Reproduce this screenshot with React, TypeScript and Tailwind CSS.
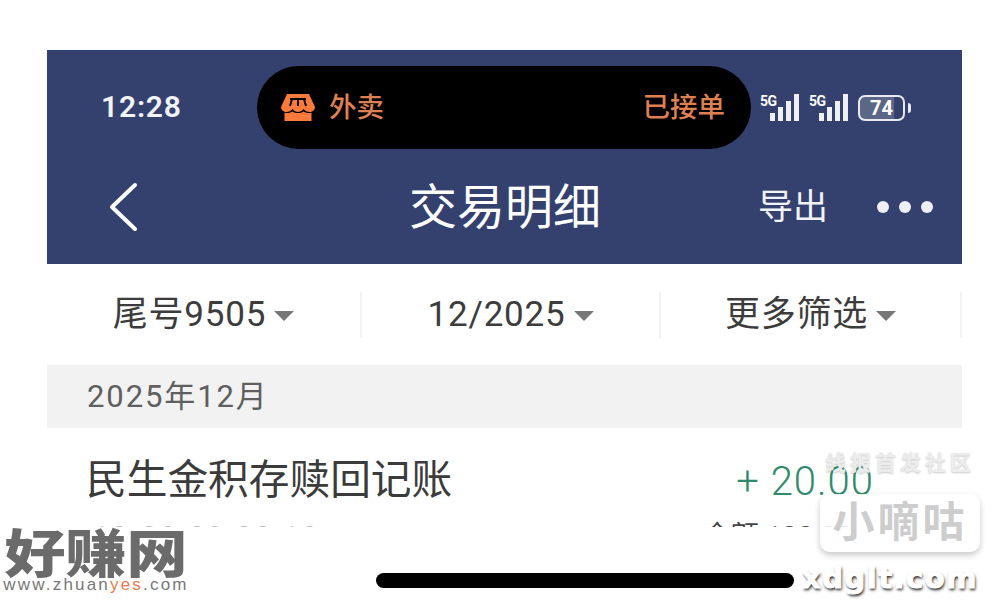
import React from "react";

const cjk = "font-['Roboto','Noto_Sans_CJK_SC',sans-serif]";

function Signal() {
  return (
    <div className="relative h-[27px] w-[39px]">
      <span className="absolute left-0 top-0 font-['Roboto',sans-serif] text-[14px] font-bold leading-[14px] tracking-[-0.5px] text-white">5G</span>
      <div className="absolute bottom-0 right-0 flex items-end gap-[3px]">
        <div className="h-[8px] w-[5px] bg-[#eef0f6]" />
        <div className="h-[14px] w-[5px] bg-[#eef0f6]" />
        <div className="h-[20px] w-[5px] bg-[#eef0f6]" />
        <div className="h-[27px] w-[5px] bg-[#eef0f6]" />
      </div>
    </div>
  );
}

function Shop() {
  return (
    <svg width="34" height="27" viewBox="0 0 34 27" fill="#fb7a3c">
      <path d="M6 0H28L34 13C34 16 31 18 28.500 18C26 18 24 17 22.500 15C21 17 19 18 17 18C15 18 13 17 11.500 15C10 17 8 18 5.500 18C3 18 0 16 0 13Z" />
      <path d="M3.500 18.500C6 19.500 9 19 11.500 17.500C14.500 19.500 19.500 19.500 22.500 17.500C25 19 28 19.500 30.500 18.500V27H3.500Z" />
      <path d="M9 5H25M11 5L9 12M17 5V12M23 5L25 12" stroke="#000" strokeWidth="2" fill="none" />
    </svg>
  );
}

function Caret() {
  return <div className="ml-[8px] mt-[2px] h-0 w-0 border-x-[10px] border-t-[10px] border-x-transparent border-t-[#777777]" />;
}

function Filter({ label, className }: { label: string; className: string }) {
  return (
    <div className={`flex h-[46px] items-center justify-center border-r-2 border-[#f3f3f3] ${className}`}>
      <span className="text-[35px] leading-none tracking-[0.8px] text-[#3c3c3c]">{label}</span>
      <Caret />
    </div>
  );
}

export default function App() {
  return (
    <div className={`relative h-[609px] w-[1000px] overflow-hidden bg-white pt-[50px] ${cjk}`}>
      <div className="mx-[47px] h-[477px] w-[915px] overflow-hidden">
        <header className="flex h-[214px] flex-col bg-[#34416f] text-white">
          <div className="flex h-[115px] items-start pt-[16px]">
            <span className="ml-[54px] mt-[24px] w-[156px] font-['Roboto',sans-serif] text-[30px] font-semibold leading-[34px] tracking-[0.8px] text-[#f2f3f7]">12:28</span>
            <div className="flex h-[83px] w-[494px] items-center justify-between rounded-[42px] bg-black pl-[24px] pr-[26px] text-[27.500px] font-medium leading-none">
              <div className="flex items-center gap-[14px] text-[#df8052]">
                <Shop />
                <span>外卖</span>
              </div>
              <span className="text-[#df8052]">已接单</span>
            </div>
            <div className="ml-[9px] mt-[28px] flex items-center gap-[10px]">
              <Signal />
              <Signal />
              <div className="flex h-[26px] w-[47px] items-center justify-center rounded-[7px] border-2 border-[#e8eaf2] bg-[linear-gradient(90deg,#5c6687_78%,#34416f_78%)] font-['Roboto',sans-serif] text-[20px] font-bold leading-none text-white">74</div>
              <div className="-ml-[7px] h-[10px] w-[3px] rounded-r bg-[#e8eaf2]" />
            </div>
          </div>
          <div className="flex h-[99px] items-start">
            <svg className="ml-[60px] mt-[16px]" width="32" height="52" viewBox="0 0 32 52" fill="none" stroke="white" strokeWidth="4" strokeLinecap="round" strokeLinejoin="round">
              <path d="M28 4L5 26L28 48" />
            </svg>
            <h1 className="ml-[270px] mt-[18px] w-[192px] whitespace-nowrap text-[48px] font-normal leading-[50px] text-white">交易明细</h1>
            <span className="ml-[157px] mt-[24px] text-[35px] leading-[38px] text-[#f2f3f7]">导出</span>
            <div className="ml-[49px] mt-[36px] flex gap-[10px]">
              <div className="h-[12px] w-[12px] rounded-full bg-[#eef0f6]" />
              <div className="h-[12px] w-[12px] rounded-full bg-[#eef0f6]" />
              <div className="h-[12px] w-[12px] rounded-full bg-[#eef0f6]" />
            </div>
          </div>
        </header>

        <div className="flex h-[101px] items-center">
          <Filter label="尾号9505" className="w-[315px]" />
          <Filter label="12/2025" className="w-[299px]" />
          <Filter label="更多筛选" className="flex-1" />
        </div>

        <div className="flex h-[63px] items-center bg-[#f2f2f2] pl-[40px] text-[31px] leading-none tracking-[1.900px] text-[#5f5f5f]">2025年12月</div>

        <div className="flex items-start justify-between pl-[39px] pr-[88px] pt-[28px]">
          <span className="text-[40.700px] leading-[48px] text-[#3b3b3b]">民生金积存赎回记账</span>
          <span className="mt-[2px] whitespace-nowrap text-[40px] font-light leading-[48px] tracking-[1px] text-[#2f8a6c]">+ 20.00</span>
        </div>
        <div className="flex justify-between pl-[46px] pr-[110px] pt-[15px]">
          <span className="text-[28px] leading-[32px] tracking-[3px] text-[#bbbbbb]">12-28 09:30:18</span>
          <span className="text-[28px] leading-[32px] text-[#444]">余额 120.00</span>
        </div>
      </div>

      {/* home indicator */}
      <div className="absolute left-[376px] top-[573px] h-[15px] w-[418px] rounded-full bg-black" />

      {/* watermark: 好赚网 */}
      <div className="absolute left-[3px] top-[528px] flex w-[186px] flex-col items-center">
        <span className="h-[49px] origin-top scale-y-[0.85] whitespace-nowrap text-[61px] font-black leading-[64px] text-[#6b6b6b]">好赚网</span>
        <span className="whitespace-nowrap font-['Liberation_Sans',sans-serif] text-[17px] leading-[16px] tracking-[2.200px] text-[#777777]">
          www.zhuan<span className="text-[#ee7a4c]">yes</span>.com
        </span>
      </div>

      {/* watermark: 小嘀咕 */}
      <div className="absolute left-[825px] top-[450px] whitespace-nowrap text-[21px] font-bold leading-[26px] tracking-[4px] text-[#ececec] [text-shadow:0_1px_2px_rgba(120,120,120,0.4)]">线报首发社区</div>
      <div className="absolute left-[820px] top-[494px] flex h-[58px] w-[160px] items-center justify-center rounded-[10px] bg-white/85 text-[42px] font-bold leading-none tracking-[3px] text-[#cdcdcd] shadow-[0_3px_6px_rgba(0,0,0,0.22)]">小嘀咕</div>
      <div className="absolute left-[802px] top-[560px] whitespace-nowrap font-['DejaVu_Sans',sans-serif] text-[29px] font-bold leading-[36px] tracking-[1.500px] text-white [-webkit-text-stroke:1px_#ffffff] [text-shadow:1px_2px_3px_rgba(0,0,0,0.9)]">xdglt.com</div>
    </div>
  );
}
